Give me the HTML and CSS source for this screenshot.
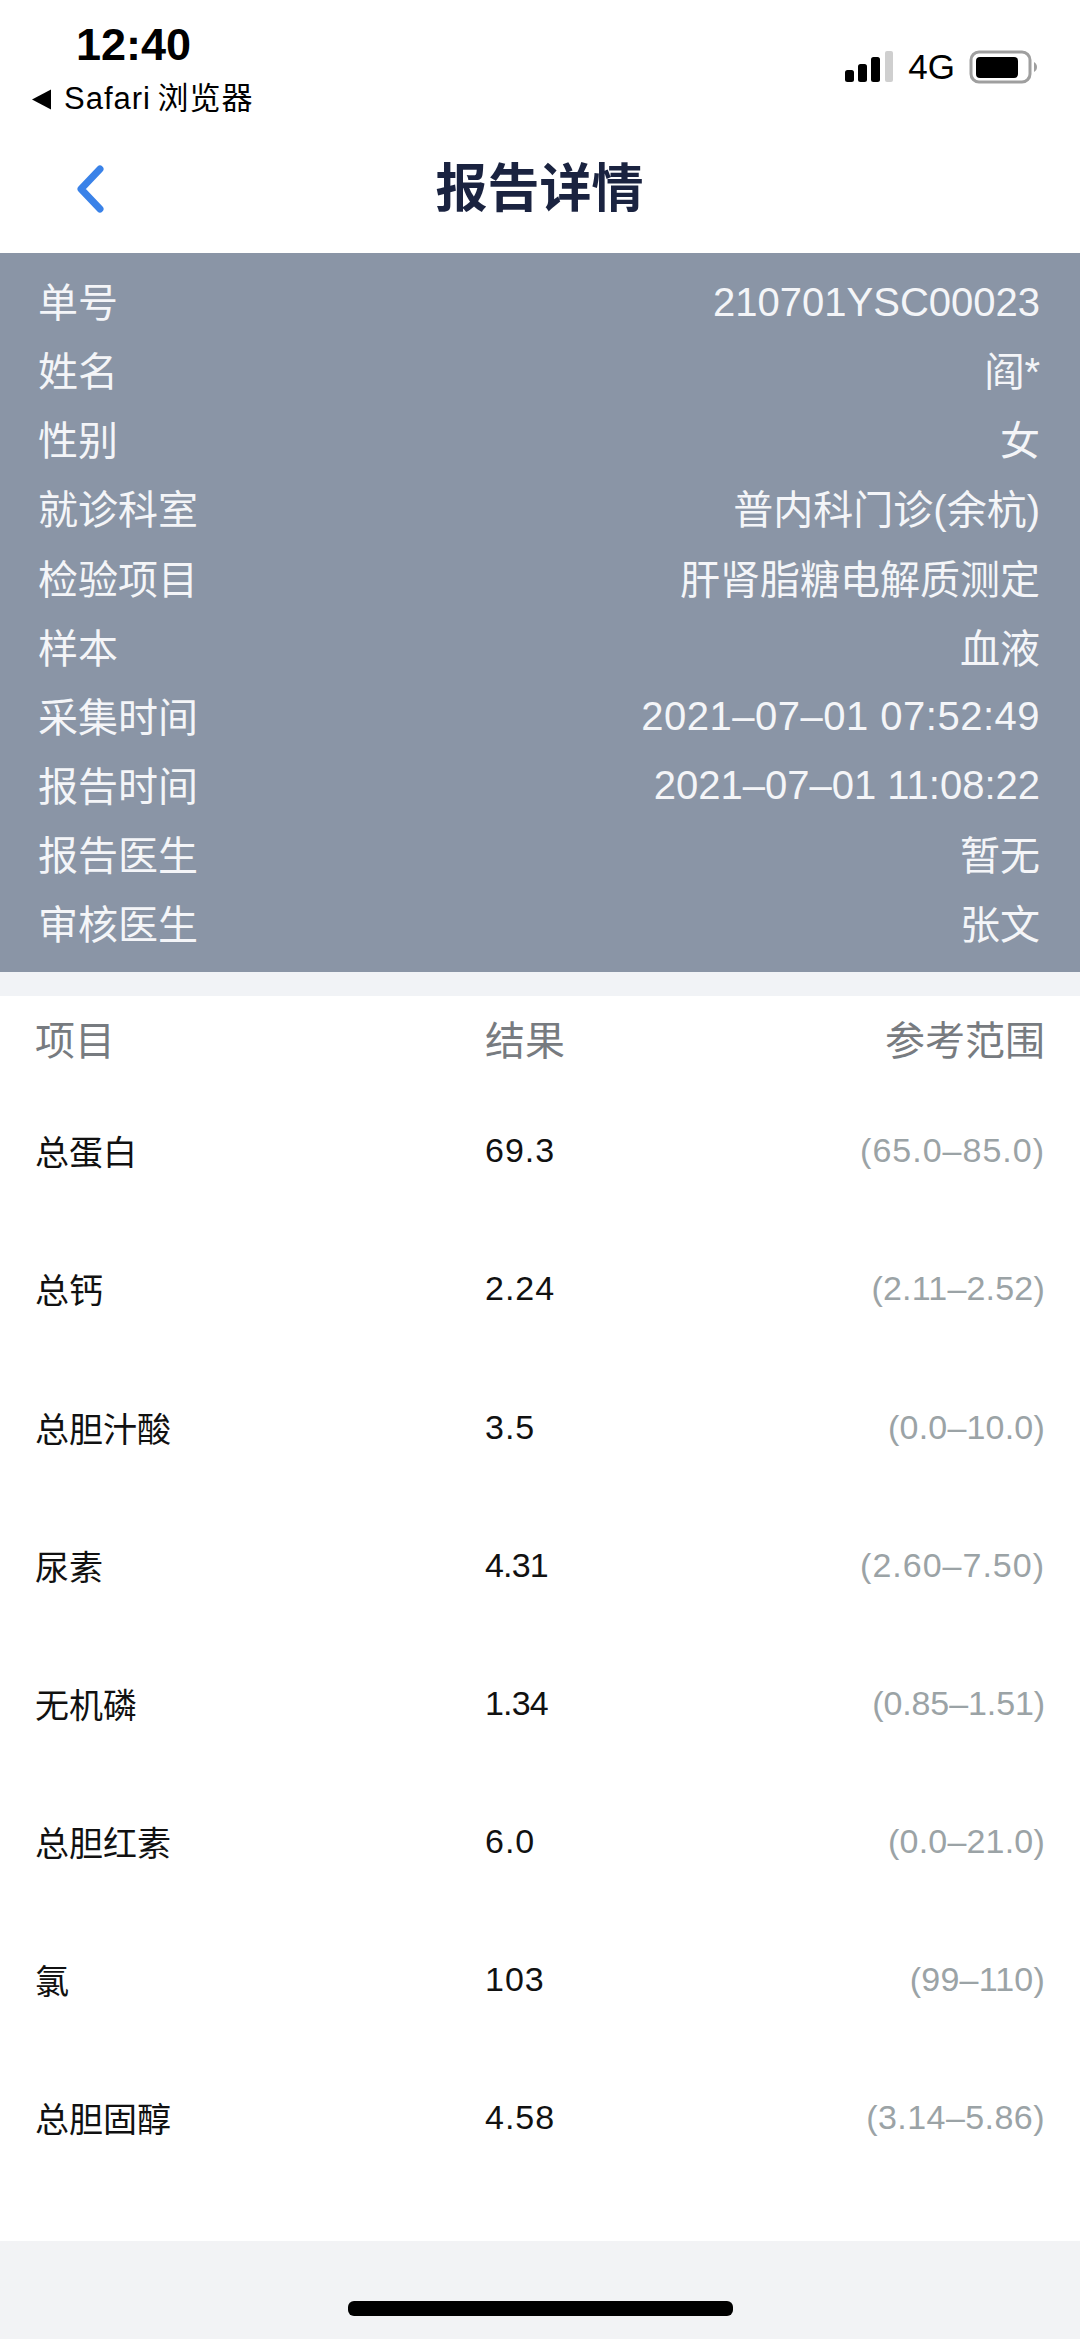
FILE: index.html
```html
<!DOCTYPE html>
<html lang="zh-CN">
<head>
<meta charset="utf-8">
<title>报告详情</title>
<link rel="stylesheet" href="styles.css">
</head>
<body>
<div class="page">
  <header class="status">
    <div class="status-left">
      <div class="time">12:40</div>
      <div class="back-app">
        <svg class="tri" width="21" height="21" viewBox="0 0 21 21"><path d="M20 0.5V20.5L1 10.5Z" fill="#000"/></svg>
        <span class="back-app-text">Safari 浏览器</span>
      </div>
    </div>
    <div class="status-right">
      <svg class="signal" width="49" height="31" viewBox="0 0 49 31">
        <rect x="0" y="19" width="9" height="12" rx="2.5" fill="#000"/>
        <rect x="13" y="13" width="9" height="18" rx="2.5" fill="#000"/>
        <rect x="26" y="6" width="9" height="25" rx="2.5" fill="#000"/>
        <rect x="40" y="0" width="8" height="31" rx="2" fill="#cfcfcf"/>
      </svg>
      <span class="net">4G</span>
      <svg class="battery" width="68" height="34" viewBox="0 0 68 34">
        <rect x="2" y="2" width="59" height="30" rx="8" fill="none" stroke="#9f9f9f" stroke-width="3"/>
        <rect x="7" y="7" width="42" height="21" rx="4" fill="#000"/>
        <path d="M65 12c2 1 3 3 3 5s-1 4-3 5z" fill="#9f9f9f"/>
      </svg>
    </div>
  </header>

  <nav class="nav">
    <svg class="chevron" width="30" height="48" viewBox="0 0 30 48"><path d="M25 4L6 24L25 44" fill="none" stroke="#3a82e8" stroke-width="7" stroke-linecap="round" stroke-linejoin="round"/></svg>
    <h1 class="title">报告详情</h1>
    <span></span>
  </nav>

  <section class="info">
    <div class="info-row"><span>单号</span><span class="latin">210701YSC00023</span></div>
    <div class="info-row"><span>姓名</span><span>阎*</span></div>
    <div class="info-row"><span>性别</span><span>女</span></div>
    <div class="info-row"><span>就诊科室</span><span>普内科门诊(余杭)</span></div>
    <div class="info-row"><span>检验项目</span><span>肝肾脂糖电解质测定</span></div>
    <div class="info-row"><span>样本</span><span>血液</span></div>
    <div class="info-row"><span>采集时间</span><span class="latin date-wide">2021–07–01 07:52:49</span></div>
    <div class="info-row"><span>报告时间</span><span class="latin date-narrow">2021–07–01 11:08:22</span></div>
    <div class="info-row"><span>报告医生</span><span>暂无</span></div>
    <div class="info-row"><span>审核医生</span><span>张文</span></div>
  </section>

  <section class="results">
    <div class="head-row"><span>项目</span><span>结果</span><span class="right">参考范围</span></div>
    <div class="row"><span>总蛋白</span><span class="num">69.3</span><span class="range">(65.0–85.0)</span></div>
    <div class="row"><span>总钙</span><span class="num">2.24</span><span class="range r2">(2.11–2.52)</span></div>
    <div class="row"><span>总胆汁酸</span><span class="num">3.5</span><span class="range r2">(0.0–10.0)</span></div>
    <div class="row"><span>尿素</span><span class="num n1">4.31</span><span class="range">(2.60–7.50)</span></div>
    <div class="row"><span>无机磷</span><span class="num n1">1.34</span><span class="range r3">(0.85–1.51)</span></div>
    <div class="row"><span>总胆红素</span><span class="num">6.0</span><span class="range r2">(0.0–21.0)</span></div>
    <div class="row"><span>氯</span><span class="num">103</span><span class="range r2">(99–110)</span></div>
    <div class="row"><span>总胆固醇</span><span class="num">4.58</span><span class="range r1">(3.14–5.86)</span></div>
  </section>

  <footer class="home"><div class="home-bar"></div></footer>
</div>
</body>
</html>
```
FILE: styles.css
```css
* { box-sizing: border-box; }
html, body { margin: 0; padding: 0; background: #fff; }
body { font-family: "Liberation Sans", "Noto Sans CJK SC", sans-serif; color: #000; }
.page { width: 1080px; height: 2339px; display: flex; flex-direction: column; overflow: hidden; background: #f1f3f6; }

.status { height: 125px; display: flex; justify-content: space-between; padding: 19px 43px 0 31px; background: #fff; }
.status-left { display: flex; flex-direction: column; }
.time { font-size: 45px; font-weight: 700; line-height: 52px; margin-left: 45px; }
.back-app { display: flex; align-items: center; gap: 12px; margin-top: 10px; height: 36px; }
.back-app-text { font-size: 31px; letter-spacing: 1px; line-height: 36px; word-spacing: -3px; }
.status-right { display: flex; align-items: center; height: 63px; margin-top: 16px; }
.signal { margin-right: 14px; }
.net { font-size: 35px; line-height: 40px; margin-right: 14px; }
.battery { display: block; }

.nav { height: 128px; display: grid; grid-template-columns: 1fr auto 1fr; align-items: center; padding-left: 75px; background: #fff; }
.chevron { display: block; }
.title { margin: 0 0 0 -76px; font-size: 52px; font-weight: 700; color: #1a2340; line-height: 70px; }

.info { background: #8a95a6; padding: 13px 40px 15px 38px; height: 720px; color: #f4f5f8; }
.info-row { height: 69.1px; display: flex; justify-content: space-between; align-items: center; font-size: 40px; }
.latin { padding-top: 4px; }
.date-wide { letter-spacing: 0.5px; }
.date-narrow { letter-spacing: 0; }

.results { margin-top: 24px; background: #fff; flex: 1; padding: 0 35px 54px 35px; }
.head-row, .row { display: grid; grid-template-columns: 450px 1fr auto; align-items: center; }
.head-row { height: 84px; margin-bottom: 2px; font-size: 40px; color: #777b80; }
.row { height: 138.2px; font-size: 34px; color: #111; }
.num { letter-spacing: 1px; }
.n1 { letter-spacing: -0.8px; }
.range { color: #9ba3a6; letter-spacing: 1px; }
.range.r1 { letter-spacing: 0.45px; }
.range.r2 { letter-spacing: 0.2px; }
.range.r3 { letter-spacing: -0.1px; }
.right { text-align: right; }

.home { height: 98px; background: #f2f3f5; display: flex; justify-content: center; padding-top: 60px; }
.home-bar { width: 385px; height: 15px; border-radius: 6px; background: #000; }
```
